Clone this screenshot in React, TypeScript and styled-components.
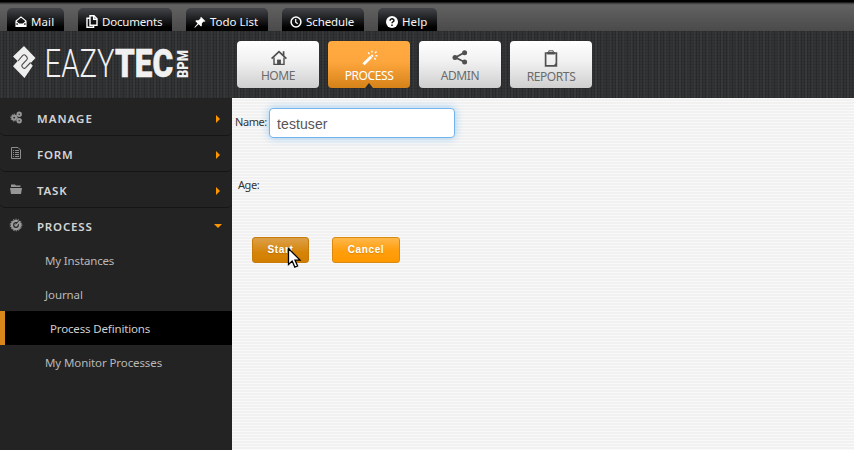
import React from "react";
import styled, { createGlobalStyle, css } from "styled-components";

const Global = createGlobalStyle`
  * { box-sizing: border-box; }
  html, body { margin: 0; height: 450px; overflow: hidden; background: #232323; }
  svg { display: block; flex: none; }
`;

const Page = styled.div`
  width: 854px;
  height: 450px;
  display: flex;
  flex-direction: column;
  font-family: "Noto Sans", "Open Sans", sans-serif;
  overflow: hidden;
`;

const TopBar = styled.nav`
  height: 31px;
  flex: none;
  display: flex;
  align-items: flex-end;
  gap: 14px;
  padding-left: 7px;
  background: linear-gradient(#000 0, #000 2px, #3a3a3a 3px, #626262 5px, #4a4a4a 31px);
`;

const TopTab = styled.a<{ $w: number; $ls: number }>`
  width: ${(p) => p.$w}px;
  height: 23px;
  display: flex;
  align-items: center;
  gap: 4px;
  padding: 4px 0 0 8px;
  border-radius: 5px 5px 0 0;
  background: linear-gradient(#43454a, #000 85%);
  color: #f6f6f6;
  font-size: 11.5px;
  line-height: 16px;
  letter-spacing: ${(p) => p.$ls}px;
  white-space: nowrap;
`;

const Header = styled.header`
  height: 67px;
  flex: none;
  display: flex;
  background-color: #323334;
  background-image: repeating-linear-gradient(90deg, rgba(0, 0, 0, 0.16) 0 1px, transparent 1px 3px),
    repeating-linear-gradient(90deg, rgba(255, 255, 255, 0.03) 0 2px, transparent 2px 7px),
    repeating-linear-gradient(0deg, rgba(0, 0, 0, 0.08) 0 1px, transparent 1px 3px);
`;

const Brand = styled.div`
  width: 237px;
  flex: none;
`;

const MainNav = styled.nav`
  display: flex;
  gap: 9px;
  padding-top: 10px;
`;

const NavButton = styled.a<{ $active?: boolean }>`
  width: 82px;
  height: 47px;
  display: flex;
  flex-direction: column;
  align-items: center;
  justify-content: flex-end;
  position: relative;
  border-radius: 4px;
  color: #6b6b6b;
  background: linear-gradient(#fff, #f0f0f0 45%, #cfcfcf);
  ${(p) =>
    p.$active &&
    css`
      color: #fff;
      background: linear-gradient(#ffab42, #fda63d 45%, #d58218);
      &::after {
        content: "";
        position: absolute;
        left: 37px;
        bottom: 0;
        border: solid transparent;
        border-width: 0 4px 5px;
        border-bottom-color: #2b2b2b;
      }
    `}
`;

const NavLabel = styled.span<{ $low?: boolean }>`
  font-size: 12px;
  line-height: 16px;
  margin: 2px 0 ${(p) => (p.$low ? 3 : 4)}px;
  letter-spacing: -0.4px;
`;

const Body = styled.div`
  flex: 1;
  display: flex;
`;

const Sidebar = styled.aside`
  width: 232px;
  flex: none;
  background: #232323;
`;

const Section = styled.div<{ $first?: boolean; $open?: boolean }>`
  height: ${(p) => (p.$first ? 38 : p.$open ? 35 : 36)}px;
  display: flex;
  align-items: center;
  padding: ${(p) => (p.$first ? 5 : 3)}px 10px 0 9px;
  border-bottom: 1px solid ${(p) => (p.$open ? "transparent" : "#151515")};
  border-radius: 0 0 5px 5px;
  color: #d4d4d4;
`;

const SectionIcon = styled.span`
  width: 28px;
  margin-top: -4px;
`;

const SectionName = styled.span<{ $ls?: number }>`
  flex: 1;
  font-size: 11.5px;
  line-height: 16px;
  font-weight: 600;
  letter-spacing: ${(p) => p.$ls ?? 0.8}px;
`;

const SubItem = styled.a<{ $active?: boolean; $ls?: number }>`
  height: 34px;
  display: flex;
  align-items: center;
  padding-left: 45px;
  font-size: 11.5px;
  letter-spacing: ${(p) => p.$ls ?? -0.1}px;
  color: #b9b9b9;
  ${(p) =>
    p.$active &&
    css`
      border-left: 5px solid #d9861a;
      background: #000;
      color: #cfcfcf;
    `}
`;

const Content = styled.main`
  flex: 1;
  padding: 10px 3px;
  background: repeating-linear-gradient(#f9f9f9 0 1px, #f1f1f1 1px 3px);
`;

const Field = styled.label<{ $indent?: number }>`
  height: 30px;
  display: flex;
  align-items: center;
  gap: 3px;
  padding-left: ${(p) => p.$indent ?? 0}px;
`;

const FieldLabel = styled.span<{ $raised?: boolean }>`
  width: 31px;
  font-size: 11px;
  line-height: 16px;
  letter-spacing: -0.45px;
  margin-top: ${(p) => (p.$raised ? -2 : 0)}px;
  color: #333;
  white-space: nowrap;
`;

const TextInput = styled.input`
  width: 186px;
  height: 30px;
  padding: 2px 7px 0;
  border: 1px solid #74b4ec;
  border-radius: 4px;
  outline: 0;
  background: #fff;
  box-shadow: 0 0 8px rgba(82, 168, 236, 0.55);
  color: #555;
  font: 14px "Liberation Sans", Arial, sans-serif;
  letter-spacing: 0.1px;
`;

const Actions = styled.div`
  display: flex;
  gap: 23px;
  padding: 37px 0 0 17px;
`;

const ActionButton = styled.button<{ $w: number; $pressed?: boolean }>`
  width: ${(p) => p.$w}px;
  height: 26px;
  position: relative;
  padding: 0;
  border: 1px solid ${(p) => (p.$pressed ? "#c87a06" : "#d98a0c")};
  border-radius: 3px;
  background: ${(p) =>
    p.$pressed ? "linear-gradient(#dca04a, #d68407 60%, #d27f00)" : "linear-gradient(#ffb84d, #ff9f0f 50%, #ff9900)"};
  color: #fff;
  font: bold 10px/22px "Liberation Sans", Arial, sans-serif;
  letter-spacing: 0.6px;
  text-shadow: 0 1px 1px rgba(0, 0, 0, 0.15);
`;

const Cursor = styled.svg`
  position: absolute;
  left: 34px;
  top: 9px;
`;

const Spacer = styled.div`
  height: 32px;
`;

const MailIcon = () => (
  <svg width="12" height="12" viewBox="0 0 12 12">
    <path d="M1 5 6 .9 11 5v5.5H1zM1 5.3l3.3 3M11 5.3l-3.3 3M1.3 10.2 4.4 8h3.2l3.1 2.2" fill="none" stroke="#fff" strokeWidth="1.1" />
    <path d="M1 11 4.4 8h3.2L11 11z" fill="#fff" />
  </svg>
);
const DocsIcon = () => (
  <svg width="12" height="13" viewBox="0 0 12 13">
    <path d="M4 .8h4l3 3v6.4H4zM7.7 1v3.2h3M3.6 3.3H1v9h6.6v-2" fill="none" stroke="#fff" strokeWidth="1.4" />
  </svg>
);
const PinIcon = () => (
  <svg width="12" height="12" viewBox="0 0 12 12">
    <path d="m7 .8 4.5 4.4-1.2.5-.7-.1-1.8 2 .1 2.2-.9.8-2.4-2.4L.9 11.7l-.5-.4 3.2-3.9L1.3 5.1l.9-.9 2.3.1 2-1.9-.1-.7z" fill="#fff" />
  </svg>
);
const ClockIcon = () => (
  <svg width="12" height="12" viewBox="0 0 12 12">
    <circle cx="6" cy="6" r="4.9" fill="none" stroke="#fff" strokeWidth="1.5" />
    <path d="M5.7 3v3.2l2 1.6" fill="none" stroke="#fff" strokeWidth="1.2" />
  </svg>
);
const HelpIcon = () => (
  <svg width="12" height="12" viewBox="0 0 12 12">
    <circle cx="6" cy="6" r="6" fill="#fff" />
    <path d="M4.1 4.7c0-2.6 4-2.3 3.8-.1C7.8 5.8 6 5.8 6 7.3M6 8.4V10" fill="none" stroke="#111" strokeWidth="1.5" />
  </svg>
);

const HomeIcon = () => (
  <svg width="18" height="16" viewBox="-2 0 18 16">
    <path d="M3 7.6v6.8h10V7.6" fill="none" stroke="#4d4d4d" strokeWidth="1.4" />
    <path d="M.6 8.6 8 1.6l7.4 7M12.6 5.8V1.2" fill="none" stroke="#4d4d4d" strokeWidth="1.7" />
    <path d="M6.1 14.8V9.6h3.8v5.2z" fill="#4d4d4d" />
  </svg>
);
const WandIcon = () => (
  <svg width="18" height="16" viewBox="-2 0 18 16">
    <path d="m1.5 14.2 7.7-7.5" stroke="#fff" strokeWidth="3" />
    <path d="m9.5 6.4 1.3-1.2" stroke="#fff" strokeWidth="2.4" />
    <path d="M6.2 2.4 7.4 4M10 .8v1.8M14.5 1.6 13 3M13.4 5.8h2M12.3 8l1.4 1.5" stroke="#fff" strokeWidth="1.4" />
  </svg>
);
const ShareIcon = () => (
  <svg width="16" height="17" viewBox="0 0 16 17">
    <path d="M12.5 3.5 3.5 8.5l9 4.5" fill="none" stroke="#505050" strokeWidth="1.9" />
    <circle cx="12.6" cy="3.7" r="2.5" fill="#505050" />
    <circle cx="3" cy="8.5" r="2.5" fill="#505050" />
    <circle cx="12.6" cy="13" r="2.5" fill="#505050" />
  </svg>
);
const ClipboardIcon = () => (
  <svg width="14" height="17" viewBox="0 0 14 17">
    <path d="M1.6 3h10.8v12.8H1.6z" fill="none" stroke="#505050" strokeWidth="1.7" />
    <path d="M3.2 2h7.6v2.5H3.2zM9 16l4-4v4z" fill="#505050" />
    <path d="M4.8 2V.8h4.4V2" fill="none" stroke="#505050" />
  </svg>
);

const ManageIcon = () => (
  <svg width="13" height="13" viewBox="-1 0 13 13" fill="none" stroke="#969696">
    <circle cx="4.2" cy="6.6" r="2" strokeWidth="2.2" />
    <circle cx="4.2" cy="6.6" r="3.5" strokeWidth="1" strokeDasharray="1.3 1.3" />
    <circle cx="9.2" cy="3.3" r="1.7" strokeWidth="2" />
    <circle cx="9.2" cy="9.7" r="1.7" strokeWidth="2" />
  </svg>
);
const FormIcon = () => (
  <svg width="13" height="14" viewBox="0 0 13 14" fill="none" stroke="#8c8c8c">
    <path d="M2.5 1.5H9l2.5 2.5v8.5h-9z" />
    <path d="M4 4.5h1M4 6.5h1M4 8.5h1M4 10.5h1M6 4.5h4M6 6.5h4M6 8.5h4M6 10.5h4" />
  </svg>
);
const FolderIcon = () => (
  <svg width="13" height="12" viewBox="0 0 13 12" fill="#969696">
    <path d="M2 4V1.5h4l1 1h4.5V4zM1 5h12l-1 6H2z" />
  </svg>
);
const GaugeIcon = () => (
  <svg width="14" height="14" viewBox="0 0 14 14" fill="none" stroke="#9c9c9c">
    <circle cx="7" cy="7" r="4.1" strokeWidth="2.4" />
    <circle cx="7" cy="7" r="5.8" strokeWidth="1" strokeDasharray="1.4 1.2" />
    <circle cx="7" cy="7" r="1.8" fill="#9c9c9c" stroke="none" />
    <path d="m6.6 6.4 3.6-4" stroke="#232323" strokeWidth="1" />
    <path d="m7 7.3 4-3.8" strokeWidth="1.4" />
  </svg>
);

const Arrow = ({ down }: { down?: boolean }) => (
  <svg width="8" height="8" viewBox="0 0 8 8">
    <path d={down ? "M0 1h8L4 5z" : "M2 0v8l4-4z"} fill="#ff9600" />
  </svg>
);

const Logo = () => (
  <svg width="200" height="67" viewBox="0 31 200 67">
    <path d="m24 46 11.5 12-5 5.2 2.3 2.6L24.5 78 13 66.2l4.6-5.2-4.6-4.6z" fill="#eee" />
    <path d="m18 61 4.8-5.6q1.4-1.4 2.7 0l1.4 1.7q1 1.3 0 2.5l-4.7 5q-1 1.4.2 2.5l.8.8q1.2 1.1 2.5-.2l4.9-5.2" fill="none" stroke="#4a4a4a" strokeWidth="1.1" />
    <g fill="#f1f1f1">
      <text x="44.5" y="77" fontFamily="Roboto" fontWeight="300" fontSize="39.5" textLength="70" lengthAdjust="spacingAndGlyphs">EAZY</text>
      <text x="115" y="77" fontFamily="Roboto" fontWeight="900" fontSize="39.5" textLength="58" lengthAdjust="spacingAndGlyphs" stroke="#f1f1f1" strokeWidth="0.6">TEC</text>
      <text transform="translate(188 78) rotate(-90)" fontFamily="Roboto" fontWeight="900" fontSize="15" textLength="28" lengthAdjust="spacingAndGlyphs">BPM</text>
    </g>
  </svg>
);

export default function App() {
  return (
    <Page>
      <Global />
      <TopBar>
        <TopTab $w={57} $ls={0.1}><MailIcon />Mail</TopTab>
        <TopTab $w={94} $ls={-0.2}><DocsIcon />Documents</TopTab>
        <TopTab $w={82} $ls={0}><PinIcon />Todo List</TopTab>
        <TopTab $w={82} $ls={-0.1}><ClockIcon />Schedule</TopTab>
        <TopTab $w={59} $ls={0.1}><HelpIcon />Help</TopTab>
      </TopBar>
      <Header>
        <Brand><Logo /></Brand>
        <MainNav>
          <NavButton><HomeIcon /><NavLabel>HOME</NavLabel></NavButton>
          <NavButton $active><WandIcon /><NavLabel>PROCESS</NavLabel></NavButton>
          <NavButton><ShareIcon /><NavLabel>ADMIN</NavLabel></NavButton>
          <NavButton><ClipboardIcon /><NavLabel $low>REPORTS</NavLabel></NavButton>
        </MainNav>
      </Header>
      <Body>
        <Sidebar>
          <Section $first><SectionIcon><ManageIcon /></SectionIcon><SectionName $ls={1}>MANAGE</SectionName><Arrow /></Section>
          <Section><SectionIcon><FormIcon /></SectionIcon><SectionName>FORM</SectionName><Arrow /></Section>
          <Section><SectionIcon><FolderIcon /></SectionIcon><SectionName>TASK</SectionName><Arrow /></Section>
          <Section $open><SectionIcon><GaugeIcon /></SectionIcon><SectionName>PROCESS</SectionName><Arrow down /></Section>
          <SubItem $ls={-0.15}>My Instances</SubItem>
          <SubItem>Journal</SubItem>
          <SubItem $active $ls={-0.15}>Process Definitions</SubItem>
          <SubItem>My Monitor Processes</SubItem>
        </Sidebar>
        <Content>
          <Field><FieldLabel $raised>Name:</FieldLabel><TextInput defaultValue="testuser" /></Field>
          <Spacer />
          <Field $indent={3}><FieldLabel>Age:</FieldLabel></Field>
          <Actions>
            <ActionButton $w={57} $pressed>
              Start
              <Cursor width="15" height="22" viewBox="0 0 15 22">
                <path d="M1.5 1.5v16l3.7-3.4 2.6 6 2.8-1.2-2.6-5.8h5z" fill="#fff" stroke="#000" strokeWidth="1.3" />
              </Cursor>
            </ActionButton>
            <ActionButton $w={68}>Cancel</ActionButton>
          </Actions>
        </Content>
      </Body>
    </Page>
  );
}
